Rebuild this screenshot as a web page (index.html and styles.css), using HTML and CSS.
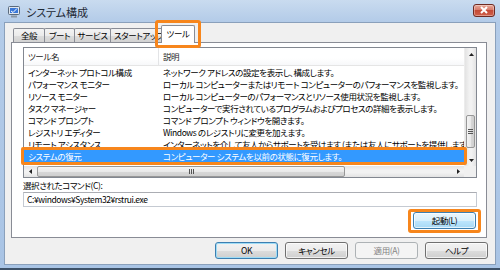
FILE: index.html
```html
<!DOCTYPE html>
<html lang="ja">
<head>
<meta charset="utf-8">
<title>システム構成</title>
<link rel="stylesheet" href="styles.css">
</head>
<body>
<div class="window">
  <div class="titlebar">
    <svg class="appicon" width="12" height="12" viewBox="0 0 12 12">
      <rect x="0.5" y="0.5" width="11" height="8" rx="1" fill="#dfe6ee" stroke="#5a6a7c"/>
      <rect x="2" y="2" width="8" height="5" fill="#3a78d8"/>
      <path d="M3 5 L5 6.5 L9 2.5" stroke="#ffffff" stroke-width="1" fill="none"/>
      <rect x="3" y="9.5" width="6" height="2" fill="#8a96a4"/>
    </svg>
    <span class="title">システム構成</span>
    <div class="close">
      <svg width="10" height="8" viewBox="0 0 10 8"><path d="M2 1 L8 7 M8 1 L2 7" stroke="#ffffff" stroke-width="2"/></svg>
    </div>
  </div>
  <div class="client">
    <div class="tabs">
      <div class="tab t1">全般</div>
      <div class="tab t2">ブート</div>
      <div class="tab t3">サービス</div>
      <div class="tab t4"><span>スタートアップ</span></div>
      <div class="tab active">ツール</div>
    </div>
    <div class="panel">
      <div class="list">
        <div class="list-main">
          <div class="list-body">
            <div class="header">
              <div class="c1">ツール名</div>
              <div class="c2">説明</div>
            </div>
            <div class="rows">
              <div class="row"><div class="c1">インターネット プロトコル構成</div><div class="c2">ネットワーク アドレスの設定を表示し、構成します。</div></div>
              <div class="row"><div class="c1">パフォーマンス モニター</div><div class="c2">ローカル コンピューターまたはリモート コンピューターのパフォーマンスを監視します。</div></div>
              <div class="row"><div class="c1">リソース モニター</div><div class="c2">ローカル コンピューターのパフォーマンスとリソース使用状況を監視します。</div></div>
              <div class="row"><div class="c1">タスク マネージャー</div><div class="c2">コンピューターで実行されているプログラムおよびプロセスの詳細を表示します。</div></div>
              <div class="row"><div class="c1">コマンド プロンプト</div><div class="c2">コマンド プロンプト ウィンドウを開きます。</div></div>
              <div class="row"><div class="c1">レジストリ エディター</div><div class="c2">Windows のレジストリに変更を加えます。</div></div>
              <div class="row"><div class="c1">リモート アシスタンス</div><div class="c2">インターネットを介して友人からサポートを受けます (または友人にサポートを提供します)。</div></div>
              <div class="row selected"><div class="c1">システムの復元</div><div class="c2">コンピューター システムを以前の状態に復元します。</div></div>
            </div>
          </div>
          <div class="vscroll">
            <div class="sarrow"><svg width="5" height="3" viewBox="0 0 5 3"><path d="M0 3 L2.5 0 L5 3 Z" fill="#222"/></svg></div>
            <div class="vtrack">
              <div class="vthumb"><span class="grip-v"></span></div>
            </div>
            <div class="sarrow"><svg width="5" height="3" viewBox="0 0 5 3"><path d="M0 0 L2.5 3 L5 0 Z" fill="#222"/></svg></div>
          </div>
        </div>
        <div class="hrow">
          <div class="hscroll">
            <div class="sarrow"><svg width="3" height="5" viewBox="0 0 3 5"><path d="M3 0 L0 2.5 L3 5 Z" fill="#222"/></svg></div>
            <div class="hthumb"><span class="grip-h"></span></div>
            <div class="htrack"></div>
            <div class="sarrow"><svg width="3" height="5" viewBox="0 0 3 5"><path d="M0 0 L3 2.5 L0 5 Z" fill="#222"/></svg></div>
          </div>
          <div class="corner"></div>
        </div>
      </div>
      <div class="cmd-label">選択されたコマンド(C):</div>
      <div class="cmd-box">C:¥windows¥System32¥rstrui.exe</div>
      <div class="launch-row"><div class="btn hot launch">起動(L)</div></div>
    </div>
    <div class="buttons">
      <div class="btn default">OK</div>
      <div class="btn">キャンセル</div>
      <div class="btn disabled">適用(A)</div>
      <div class="btn">ヘルプ</div>
    </div>
  </div>
</div>
</body>
</html>
```

FILE: styles.css
```css
* { box-sizing: border-box; }
html, body { margin: 0; padding: 0; }
body {
  width: 500px;
  height: 270px;
  overflow: hidden;
  background: #ffffff;
  color: #000;
  font-family: "Noto Sans CJK JP", "Noto Sans", sans-serif;
  font-feature-settings: "palt";
  font-size: 8.5px;
  letter-spacing: -0.4px;
}
.window {
  width: 500px;
  height: 270px;
  display: flex;
  flex-direction: column;
  padding: 0 4px 3px 4px;
  background: linear-gradient(to bottom, #c9dbef 0px, #b3cbe8 22px, #a9c4e5 100%);
  border-bottom: 2px solid #3d5168;
}
.titlebar {
  height: 22px;
  flex: none;
  display: flex;
  align-items: center;
  padding-left: 4px;
  padding-top: 2px;
}
.appicon { flex: none; }
.title {
  margin-left: 6px;
  font-size: 11px;
  letter-spacing: 0;
  color: #1e2a36;
  flex: 1;
}
.close {
  width: 22px;
  height: 13px;
  margin-right: 1px;
  margin-top: -4px;
  border: 1px solid #6e2a22;
  border-radius: 3px;
  background: linear-gradient(to bottom, #e8a898 0%, #d77a6a 45%, #c44a36 50%, #d0604a 100%);
  display: flex;
  align-items: center;
  justify-content: center;
  box-shadow: inset 0 0 0 1px rgba(255,255,255,0.35);
}
.client {
  flex: 1;
  background: #f0f0f0;
  border: 1px solid #8aa0bb;
  display: flex;
  flex-direction: column;
}
.tabs {
  height: 19px;
  flex: none;
  display: flex;
  align-items: flex-end;
  padding-left: 8px;
  position: relative;
  z-index: 2;
}
.tab {
  height: 14px;
  border: 1px solid #898c95;
  border-bottom: none;
  margin-right: -1px;
  background: linear-gradient(to bottom, #f3f3f3 0%, #ebebeb 50%, #dddddd 51%, #d2d2d2 100%);
  line-height: 12px;
  text-align: center;
  white-space: nowrap;
  overflow: hidden;
  border-radius: 2px 2px 0 0;
}
.t1 { width: 32px; }
.t2 { width: 31px; }
.t3 { width: 37px; }
.t4 { width: 54px; text-align: left; padding-left: 3px; }
.tab.active {
  width: 34px;
  height: 18px;
  margin-left: -2px;
  margin-bottom: -1px;
  background: #ffffff;
  line-height: 15px;
  position: relative;
  overflow: visible;
}
.tab.active::after {
  content: "";
  position: absolute;
  left: -7px;
  right: -7px;
  top: -6px;
  bottom: -5px;
  border: 3px solid #f7861c;
  border-radius: 3px;
}
.panel {
  flex: none;
  height: 196px;
  margin: 0 8px 0 6px;
  border: 1px solid #898c95;
  background: #ffffff;
  padding: 4px 9px 0 11px;
  display: flex;
  flex-direction: column;
}
.list {
  border: 1px solid #828790;
  display: flex;
  flex-direction: column;
  flex: none;
}
.list-main {
  display: flex;
  height: 118px;
}
.list-body {
  flex: 1;
  min-width: 0;
  display: flex;
  flex-direction: column;
}
.header {
  height: 18px;
  flex: none;
  display: flex;
  border-bottom: 1px solid #e5e5e5;
  background: linear-gradient(to bottom, #ffffff, #ffffff 60%, #f7f8fa);
}
.header .c1 {
  border-right: 1px solid #e3e4e6;
}
.c1 {
  width: 135px;
  flex: none;
  padding-left: 4px;
  white-space: nowrap;
  overflow: hidden;
}
.c2 {
  padding-left: 4px;
  white-space: nowrap;
  overflow: hidden;
  flex: 1;
  min-width: 0;
}
.header .c1, .header .c2 { line-height: 17px; color: #1b1b1b; }
.rows {
  flex: 1;
  overflow: visible;
  padding-top: 0;
}
.row {
  height: 12px;
  display: flex;
  line-height: 12px;
}
.row.selected {
  background: #3399ff;
  color: #ffffff;
  position: relative;
}
.row.selected::after {
  content: "";
  position: absolute;
  left: -3px;
  right: -3px;
  top: -3px;
  bottom: -3px;
  border: 3px solid #f7861c;
  border-radius: 2px;
}
.vscroll {
  width: 12px;
  flex: none;
  display: flex;
  flex-direction: column;
  background: linear-gradient(to right, #e3e3e3, #f2f2f2 40%, #f2f2f2 60%, #e3e3e3);
  border-left: 1px solid #ececec;
}
.sarrow {
  width: 12px;
  height: 12px;
  flex: none;
  display: flex;
  align-items: center;
  justify-content: center;
}
.vtrack {
  flex: 1;
  display: flex;
  flex-direction: column;
}
.vthumb {
  margin-top: 55px;
  height: 33px;
  margin-left: 1px;
  margin-right: 1px;
  border: 1px solid #979797;
  border-radius: 2px;
  background: linear-gradient(to right, #f4f4f4, #e9e9e9 50%, #d8d8d8 51%, #cfcfcf);
  display: flex;
  align-items: center;
  justify-content: center;
}
.grip-v {
  width: 5px;
  height: 5px;
  border-top: 1px solid #555;
  border-bottom: 1px solid #555;
  background: linear-gradient(to bottom, transparent 1px, #555 1px, #555 2px, transparent 2px);
}
.hrow {
  display: flex;
  height: 11px;
}
.hscroll {
  flex: 1;
  display: flex;
  background: linear-gradient(to bottom, #e3e3e3, #f2f2f2 40%, #f2f2f2 60%, #e3e3e3);
}
.hscroll .sarrow { height: 11px; }
.hthumb {
  width: 308px;
  flex: none;
  margin-left: 1px;
  border: 1px solid #979797;
  border-radius: 2px;
  background: linear-gradient(to bottom, #f4f4f4, #e9e9e9 50%, #d8d8d8 51%, #cfcfcf);
  display: flex;
  align-items: center;
  justify-content: center;
}
.grip-h {
  width: 5px;
  height: 5px;
  border-left: 1px solid #555;
  border-right: 1px solid #555;
  background: linear-gradient(to right, transparent 1px, #555 1px, #555 2px, transparent 2px);
}
.htrack { flex: 1; }
.corner {
  width: 12px;
  flex: none;
  background: #f0f0f0;
}
.cmd-label {
  margin-top: 2px;
  height: 11px;
  line-height: 11px;
  white-space: nowrap;
}
.cmd-box {
  margin-top: 1px;
  height: 15px;
  border: 1px solid #c5cad2;
  border-top-color: #abadb3;
  line-height: 13px;
  padding-left: 3px;
  white-space: nowrap;
}
.launch-row {
  display: flex;
  justify-content: flex-end;
  margin-top: 5px;
  padding-right: 1px;
}
.btn {
  width: 63px;
  height: 17px;
  border: 1px solid #707070;
  border-radius: 3px;
  background: linear-gradient(to bottom, #f2f2f2 0%, #ebebeb 50%, #dddddd 51%, #cfcfcf 100%);
  box-shadow: inset 0 0 0 1px rgba(255,255,255,0.7);
  text-align: center;
  line-height: 15px;
  white-space: nowrap;
}
.btn.hot, .btn.default {
  border-color: #3c7fb1;
}
.btn.hot {
  background: linear-gradient(to bottom, #eaf6fd 0%, #d9f0fc 50%, #bee6fd 51%, #a7d9f5 100%);
}
.btn.default {
  box-shadow: inset 0 0 0 1px #9edcf6;
}
.btn.disabled {
  border-color: #adb2b5;
  background: #f4f4f4;
  color: #838383;
  box-shadow: none;
}
.launch { position: relative; }
.launch::after {
  content: "";
  position: absolute;
  left: -6px;
  right: -6px;
  top: -4px;
  bottom: -5px;
  border: 3px solid #f7861c;
  border-radius: 3px;
}
.buttons {
  display: flex;
  justify-content: flex-end;
  gap: 7px;
  margin-top: 4px;
  padding-right: 7px;
}
```
